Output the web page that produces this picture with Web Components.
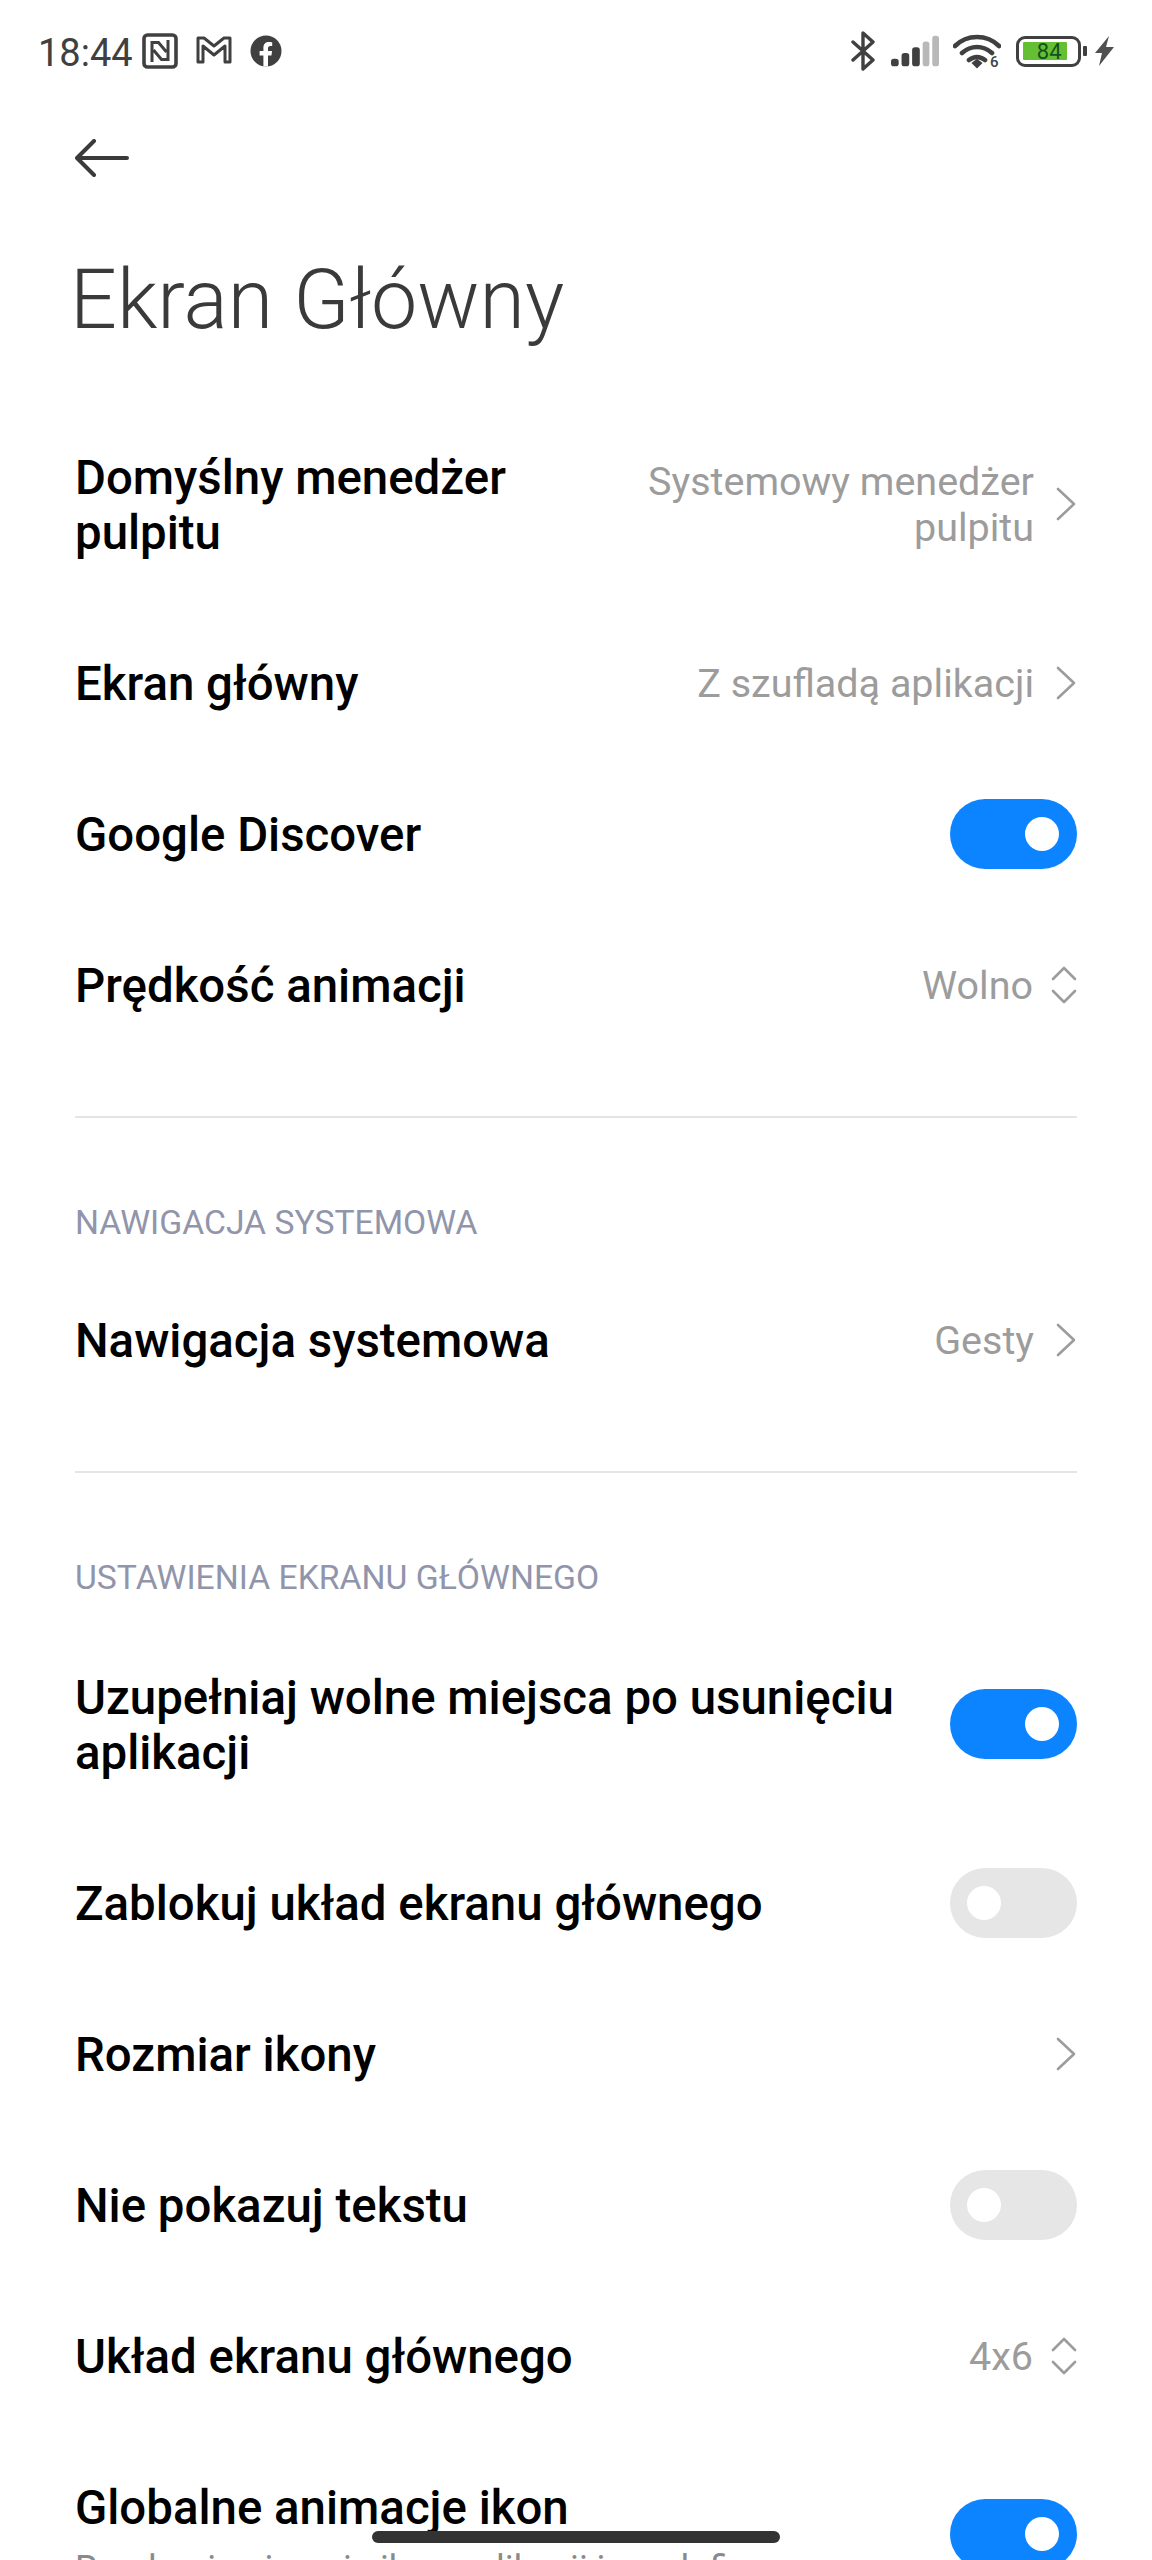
<!DOCTYPE html>
<html>
<head>
<meta charset="utf-8">
<style>
html,body{margin:0;background:#fff;}
body{width:1152px;height:2560px;overflow:hidden;position:relative;font-family:Roboto,sans-serif;}
</style>
</head>
<body>
<status-bar></status-bar>
<page-head title="Ekran Główny"></page-head>
<main style="display:block;margin-top:50px">
  <set-row label="Domyślny menedżer<br>pulpitu" value="Systemowy menedżer<br>pulpitu" kind="chevron" tall></set-row>
  <set-row label="Ekran główny" value="Z szufladą aplikacji" kind="chevron"></set-row>
  <set-row label="Google Discover" kind="on"></set-row>
  <set-row label="Prędkość animacji" value="Wolno" kind="updown"></set-row>
  <set-section title="NAWIGACJA SYSTEMOWA" style="--after:61px"></set-section>
  <set-row label="Nawigacja systemowa" value="Gesty" kind="chevron"></set-row>
  <set-section title="USTAWIENIA EKRANU GŁÓWNEGO" style="--after:62px"></set-section>
  <set-row label="Uzupełniaj wolne miejsca po usunięciu<br>aplikacji" kind="on" tall></set-row>
  <set-row label="Zablokuj układ ekranu głównego" kind="off"></set-row>
  <set-row label="Rozmiar ikony" kind="chevron"></set-row>
  <set-row label="Nie pokazuj tekstu" kind="off"></set-row>
  <set-row label="Układ ekranu głównego" value="4x6" kind="updown"></set-row>
  <set-row label="Globalne animacje ikon" sub="Renderuj animacje ikon aplikacji innych firm" kind="on" tall style="height:205px"></set-row>
</main>
<home-bar></home-bar>
<script>
class StatusBar extends HTMLElement{
    connectedCallback(){
        this.attachShadow({mode:'open'});
        this.shadowRoot.innerHTML=`
        <style>
        :host{display:flex;align-items:center;justify-content:space-between;height:102px;padding:0 37px 0 38px;color:#404040;}
        .side{display:flex;align-items:center;}
        .time{font-size:38px;line-height:44px;margin-right:9px;position:relative;top:2px;}
        svg{display:block;}
        </style>
        <div class="side">
            <span class="time">18:44</span>
            <svg width="36" height="36" viewBox="0 0 36 36" fill="none" stroke="#404040" stroke-width="3.6"><rect x="2" y="2" width="32" height="32" rx="3.5"/><path d="M10 29V9.5h6.5l8 9.5M26 7v19.5h-6.5l-8-9.5" stroke-width="3"/></svg>
            <svg style="margin-left:18px" width="36" height="30" viewBox="0 0 36 30" fill="none" stroke="#404040" stroke-width="3" stroke-linejoin="round"><path d="M2 2h6l10 8 10-8h6v24h-5V10l-11 9L7 10v16H2z"/></svg>
            <svg style="margin-left:18px" width="32" height="32" viewBox="0 0 32 32"><circle cx="16" cy="16" r="15.5" fill="#404040"/><path d="M13.4 31.5V20.4H9.6V16h3.8v-3.3c0-3.8 2.2-5.8 5.7-5.8 1.6 0 3.1.3 3.1.3v3.7h-1.8c-1.8 0-2.4 1.1-2.4 2.3V16h4.1l-.7 4.4h-3.4v11.1z" fill="#fff"/></svg>
        </div>
        <div class="side">
            <svg width="26" height="40" viewBox="0 0 26 40" fill="none" stroke="#404040" stroke-width="3.4" stroke-linecap="round" stroke-linejoin="round"><path d="M3 11l20 18-10 9V2l10 9L3 29"/></svg>
            <svg style="margin-left:15px" width="48" height="32" viewBox="0 0 50 32"><rect x="0" y="24" width="8" height="8" rx="3" fill="#404040"/><rect x="11" y="18" width="8" height="14" rx="3" fill="#404040"/><rect x="22" y="12" width="8" height="20" rx="3" fill="#404040"/><rect x="33" y="6" width="7" height="26" rx="3" fill="#b8b8b8"/><rect x="43" y="0" width="7" height="32" rx="3" fill="#b8b8b8"/></svg>
            <div style="position:relative;margin-left:14px;width:48px;height:36px">
                <svg width="48" height="36" viewBox="0 0 48 36" fill="none" stroke="#404040" stroke-width="4.6" stroke-linecap="round"><path d="M2 13C14 1 34 1 46 13M9 20c9-8 21-8 30 0M16 27c5-4 11-4 16 0"/><path d="M20 30l4-3 4 3-4 4z" fill="#404040" stroke-width="2"/></svg>
                <span style="position:absolute;left:37px;top:20px;font-size:15px;line-height:18px;font-weight:500">6</span>
            </div>
            <div style="position:relative;margin-left:15px;width:65px;height:31px;box-sizing:border-box;border:3.5px solid #404040;border-radius:9px;padding:3px 3.5px;display:flex">
                <span style="background:#65bf32;border-radius:1px;width:44px;height:18px;flex:none;font-size:22px;line-height:19px;color:#14501e;text-align:right;padding-right:5px;box-sizing:border-box">84</span>
            </div>
            <div style="width:4px;height:10px;background:#404040;border-radius:1px;margin-left:2px"></div>
            <svg style="margin-left:8px" width="20" height="30" viewBox="0 0 20 30"><path d="M14 0L0 17h7L4 30 19 11h-8z" fill="#505050"/></svg>
        </div>`;
    }
}
class PageHead extends HTMLElement{
    connectedCallback(){
        this.attachShadow({mode:'open'});
        this.shadowRoot.innerHTML=`
        <style>
        :host{display:block;padding:0 73px 0 75px;color:#3a3a3a;}
        svg{display:block;margin-top:37px;}
        h1{margin:73px 0 0 -5px;font-size:82.5px;line-height:100px;font-weight:300;}
        </style>
        <svg width="54" height="38" viewBox="0 0 54 38" fill="none" stroke="#3a3a3a" stroke-width="4" stroke-linecap="round" stroke-linejoin="round"><path d="M52 19H2M19 2L2 19l17 17"/></svg>
        <h1>${this.getAttribute('title')}</h1>`;
    }
}
class SetRow extends HTMLElement{
    connectedCallback(){
        this.attachShadow({mode:'open'});
        const kind=this.getAttribute('kind');
        const value=this.getAttribute('value');
        const sub=this.getAttribute('sub');
        let end='';
        if(kind==='chevron') end=`<svg width="22" height="34" viewBox="0 0 22 34" fill="none" stroke="#9c9c9c" stroke-width="2.6" stroke-linecap="round" stroke-linejoin="round"><path d="M3 2l16 15L3 32"/></svg>`;
        if(kind==='updown') end=`<svg width="26" height="40" viewBox="0 0 26 40" fill="none" stroke="#9c9c9c" stroke-width="2.6" stroke-linecap="round" stroke-linejoin="round"><path d="M2 14L13 3l11 11M2 26l11 11 11-11"/></svg>`;
        if(kind==='on'||kind==='off') end=`<div class="sw ${kind}"><i></i></div>`;
        this.shadowRoot.innerHTML=`
        <style>
        :host{display:flex;align-items:center;justify-content:space-between;height:151px;box-sizing:border-box;padding:0 75px;}
        :host([tall]){height:207px;}
        .txt{font-size:47.4px;line-height:55px;font-weight:500;color:#000;padding-top:4px;}
        .txt small{display:block;font-size:36px;line-height:44px;font-weight:400;color:#8a8a8a;margin-top:11px;white-space:nowrap;}
        .end{display:flex;align-items:center;flex:none;}
        .val{font-size:39.5px;line-height:46px;color:#9c9c9c;text-align:right;margin-right:21px;padding-top:2px;}
        .val.ud{margin-right:18px;}
        .sw{width:127px;height:70px;border-radius:35px;position:relative;}
        .sw.on{background:#0d84ff;}
        .sw.off{background:#e6e6e6;}
        .sw i{position:absolute;top:18px;width:34px;height:34px;border-radius:50%;background:#fff;}
        .sw.on i{right:18px;}
        .sw.off i{left:17px;}
        </style>
        <div class="txt">${this.getAttribute('label')}${sub?`<small>${sub}</small>`:''}</div>
        <div class="end">${value?`<div class="val${kind==='updown'?' ud':''}">${value}</div>`:''}${end}</div>`;
    }
}
class SetSection extends HTMLElement{
    connectedCallback(){
        this.attachShadow({mode:'open'});
        this.shadowRoot.innerHTML=`
        <style>
        :host{display:block;padding:56px 75px 0;}
        hr{margin:0;border:0;height:2px;background:#e4e4e4;}
        div{font-size:33.7px;line-height:40px;color:#9195ab;margin:85px 0 0;height:var(--after,62px);}
        </style>
        <hr>
        <div>${this.getAttribute('title')}</div>`;
    }
}
class HomeBar extends HTMLElement{
    connectedCallback(){
        this.attachShadow({mode:'open'});
        this.shadowRoot.innerHTML=`
        <style>
        :host{display:block;position:absolute;left:372px;top:2531px;width:408px;height:12px;border-radius:6px;background:#333;}
        </style>`;
    }
}
customElements.define('status-bar',StatusBar);
customElements.define('page-head',PageHead);
customElements.define('set-row',SetRow);
customElements.define('set-section',SetSection);
customElements.define('home-bar',HomeBar);
</script>
</body>
</html>
